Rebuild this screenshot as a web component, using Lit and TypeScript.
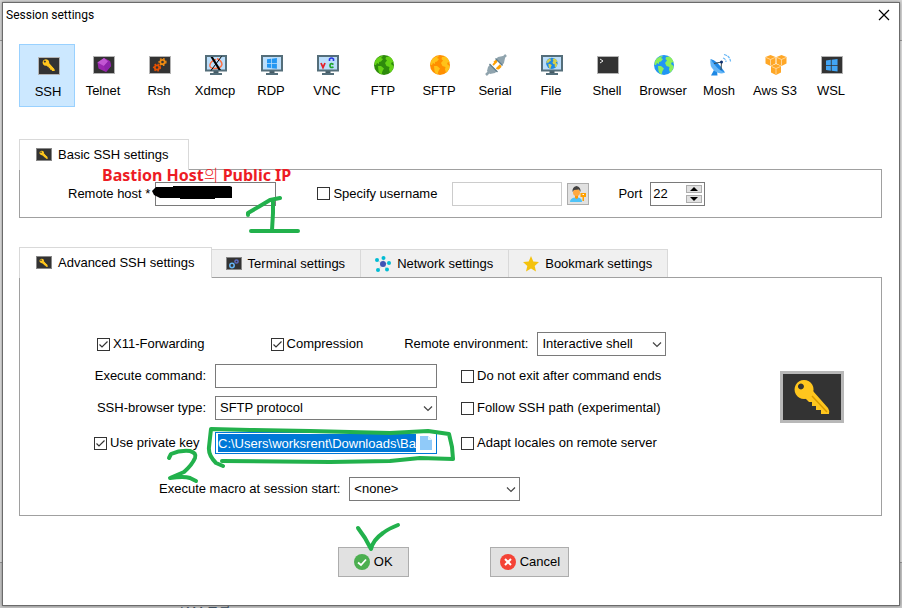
import { LitElement, html, svg, css, nothing } from "lit";
import { customElement, property } from "lit/decorators.js";
import { classMap } from "lit/directives/class-map.js";

/* ---------- icon artwork ---------- */

const keyShape = svg`
  <path d="M25 27 L33 20 L48 37 Q50 40 49 43 L41 43 L41 39 L36 39 L36 35 L32 35 L32 31 L29 31 Z" fill="#ffc61e"/>
  <path d="M32 25 L47 41" stroke="#d99a00" stroke-width="1.500"/>
  <path d="M24 9 a9.5 9.5 0 1 0 .1 0 Z M21 12.500 a3 3 0 1 1 -.1 0 Z" fill="#ffc61e" fill-rule="evenodd"/>`;

const screen = svg`<rect x="1.500" y="3.500" width="21" height="17" fill="#333" stroke="#b4b4b4"/>`;
const keyScreen = svg`${screen}<g transform="translate(.5 2) scale(.35)">${keyShape}
  <path d="M30 24 L46 40" stroke="#ffc61e" stroke-width="6"/></g>`;

const monitor = svg`
  <rect x="9.500" y="18" width="5" height="3" fill="#455a64"/>
  <rect x="6" y="20" width="12" height="2" fill="#546e7a"/>
  <rect x="2" y="3" width="20" height="14.500" fill="#bbdefb" stroke="#546e7a" stroke-width="2"/>`;

const gear = (x: number, y: number, r: number, color: string) => svg`
  <circle cx=${x} cy=${y} r=${r} fill="none" stroke=${color} stroke-width="1.800"/>
  <circle cx=${x} cy=${y} r=${r + 1.2} fill="none" stroke=${color} stroke-width="1.400" stroke-dasharray="1.600 1.650"/>`;

const globe = (sea: string, land: string) => svg`
  <circle cx="12" cy="12" r="10" fill=${sea}/>
  <path d="M4 6.500 Q7 3 11 3 L9 5 L11 6 L9 8.500 L7 9 L7 11 L5 10 L4 12 L2.500 12 Q2.200 9 4 6.500 Z M6 13 L9 13 L12 15.500 L10.500 18 L9.500 21.500 Q7 20.500 6.500 18 Z M14 4 L17.500 3.600 Q21 6 22 10 L20 9 L19 11 L21.500 13 Q21.500 17 18 19.800 L17 16.500 L17.500 14 L14.500 13 L13 10 L15 7.500 L13.500 6 Z" fill=${land}/>`;

const winLogo = (x: number, y: number, s: number, c: string) => svg`
  <g transform="translate(${x} ${y}) scale(${s})" fill=${c}>
    <path d="M0 1.500 L4.600 .8 V5.600 H0 Z M5.400 .7 L11 0 V5.600 H5.400 Z M0 6.400 H4.600 V11.200 L0 10.500 Z M5.400 6.400 H11 V12 L5.400 11.300 Z"/>
  </g>`;

const cube = (x: number, y: number) => svg`
  <g transform="translate(${x} ${y})">
    <path d="M0 2 L5 0 L10 2 V8.500 L5 11 L0 8.500 Z" fill="#ffa726"/>
    <path d="M.5 2.500 L5 4.500 L9.500 2.500 M5 4.500 V10.500" fill="none" stroke="#ffe0b2" stroke-width=".8"/>
  </g>`;

const art: Record<string, unknown> = {
  ssh: keyScreen,
  telnet: svg`${screen}
    <path d="M12 5 L18 8 L19 13 L14 19 L6.500 15.500 L5.500 9.500 Z" fill="#9c27b0"/>
    <path d="M12 5 L16 8.500 L12 13 L5.500 9.500 Z" fill="#c256d3"/>
    <path d="M12 13 L16 8.500 L18 8 L19 13 L14 19 Z" fill="#8e24aa"/>`,
  rsh: svg`${screen}${gear(9, 14.5, 2.2, "#e65100")}${gear(14.5, 9, 2.2, "#ef8b12")}`,
  xdmcp: svg`${monitor}
    <path d="M13 5.500 Q18 8 18 11.500 Q17 15.500 10 15.500 Q5 15 6 11.500 Q7 8 12 6.500" fill="none" stroke="#ff7043" stroke-width="1.400"/>
    <path d="M6.500 4 H9 L17 17 H14.500 Z" fill="#000"/>
    <path d="M17.500 3.500 L7 17.500" stroke="#000" stroke-width="1"/>`,
  rdp: svg`${monitor}${winLogo(7, 5, .9, "#2196f3")}`,
  vnc: svg`${monitor}
    <path d="M5 10 L7 14.500 L9 10" fill="none" stroke="#e5202a" stroke-width="1.800"/>
    <path d="M13.500 8 V6 Q15.500 4 17.500 6 V8" fill="none" stroke="#2836e0" stroke-width="1.600"/>
    <path d="M17.500 11.500 Q14 9.500 14 12.500 Q14 15.500 17.500 14" fill="none" stroke="#1fa32c" stroke-width="1.700"/>`,
  ftp: globe("#2e8b0c", "#64d216"),
  sftp: globe("#ff8f00", "#ffc21a"),
  serial: svg`
    <path d="M10 9.500 L13 7 M14 16 L17 13 M9 12 L13 8 M12.500 16 L16.500 12" stroke="#ffa000" stroke-width="1.800"/>
    <path d="M2 22 L5 19" stroke="#90a4ae" stroke-width="2.500"/>
    <path d="M22 2 L19 5" stroke="#90a4ae" stroke-width="2.500"/>
    <path d="M3 18 L4 14 L6 11.500 L13 18 L11 20 L6 21 Z" fill="#90a4ae"/>
    <path d="M12 6 L14 4 L19 3 L21 5 L20 10 L18 12.500 Z" fill="#90a4ae"/>
    <path d="M5.500 11 L13.500 19 M11.500 5.500 L18.500 12.500" stroke="#607d8b" stroke-width="1.300"/>`,
  file: svg`${monitor}<g transform="translate(5 3.500) scale(.57)">${globe("#1e88e5", "#d4cf4e")}</g>`,
  shell: svg`${screen}<path d="M4 6 L7 8 L4 10" fill="none" stroke="#eee"/>`,
  browser: globe("#2196f3", "#8bf05a"),
  mosh: svg`
    <path d="M6 17 L3 22.500 H9.500 L9 18 Z" fill="#1e88e5"/>
    <path d="M2.500 6 Q1 13 6.500 18 Q12 22 17 19.500 Z" fill="#64b5f6"/>
    <path d="M2.500 6 Q9 7 17 19.500 Q10 18 2.500 6 Z" fill="#1e88e5"/>
    <path d="M6 10.500 L13.500 9 L13 17" fill="none" stroke="#37474f"/>
    <circle cx="13.500" cy="9" r="1.500" fill="#0d2f6e"/>
    <path d="M15 5 Q18 6 18 9 M16 1.500 Q22 3 22.500 8.500" fill="none" stroke="#64b5f6" stroke-width="1.200" stroke-dasharray="3 .8"/>`,
  s3: svg`${cube(1.5, 2)}${cube(12.5, 2)}${cube(7, 11)}`,
  wsl: svg`${screen}${winLogo(6, 6, 1.05, "#42a5f5")}`,
};

const small: Record<string, unknown> = {
  key: svg`<rect x=".5" y="1.500" width="15" height="12" fill="#333" stroke="#888"/>
    <g transform="translate(0 1.500) scale(.24)">${keyShape}<path d="M30 24 L46 38" stroke="#ffc61e" stroke-width="7"/></g>`,
  terminal: svg`<rect x=".5" y="1.500" width="15" height="12" fill="#333" stroke="#888"/>
    <circle cx="6" cy="9.500" r="2.200" fill="none" stroke="#64b5f6" stroke-width="1.500"/>
    <circle cx="10.500" cy="5.500" r="1.600" fill="none" stroke="#5c6bc0" stroke-width="1.500"/>`,
  network: svg`<path d="M8 8 L2 4 M8 8 L8.500 2 M8 8 L14 7 M8 8 L12 13.500 M8 8 L3 14" stroke="#cfd8dc"/>
    <circle cx="8" cy="8" r="3" fill="#3f51b5"/>
    <g fill="#00bcd4"><circle cx="2" cy="4" r="2"/><circle cx="8.500" cy="2" r="2"/><circle cx="14" cy="7" r="2"/><circle cx="12" cy="13.500" r="2"/><circle cx="3" cy="14" r="2"/></g>`,
  star: svg`<path d="M8 0 L10.300 5.500 L16 6 L11.700 10 L13 15.500 L8 12.500 L3 15.500 L4.300 10 L0 6 L5.700 5.500 Z" fill="#f4c20d"/>`,
  ok: svg`<circle cx="8" cy="8" r="8" fill="#4caf50"/><path d="M4 8.500 L7 11 L12 5.500" fill="none" stroke="#fff" stroke-width="1.800"/>`,
  cancel: svg`<circle cx="8" cy="8" r="8" fill="#f44336"/><path d="M5 5 L11 11 M11 5 L5 11" stroke="#fff" stroke-width="2"/>`,
  file: svg`<path d="M2 1 H10 L14 5 V15 H2 Z" fill="#90caf9"/><path d="M10 1 V5 H14 Z" fill="#e1f5fe"/>`,
  user: svg`
    <path d="M0 16 Q0 12 5 11.500 H8 Q12 12 12 16 Z" fill="#4fc3f7"/>
    <path d="M5 9 H8 V12 L6.500 13 L5 12 Z" fill="#ff9800"/>
    <circle cx="6.500" cy="6.500" r="3.500" fill="#ffa940"/>
    <path d="M2.500 6 Q2 1 6.500 0 Q11 1 10.500 6 L9 3.500 L4 4 Z" fill="#424242"/>
    <path d="M10.500 7 H16 V11 H14 V15 H12.500 V11 H10.500 Z" fill="#ffa000"/><rect x="12.500" y="8" width="1.500" height="1" fill="#fff"/>`,
};

const smallIcon = (name: string) =>
  html`<svg class="ico" viewBox="0 0 16 16" aria-hidden="true">${small[name]}</svg>`;

const base = css`
  :host, button, input, select { font: 13px/16px "Liberation Sans", Arial, sans-serif; color: #000; }
  * { box-sizing: border-box; }
  button { margin: 0; padding: 0; border: 0; background: none; }
  input { margin: 0; }
  svg { display: block; flex: none; }
  .ico { width: 16px; height: 16px; }
`;

/* ---------- tick box with its label ---------- */

@customElement("check-field")
class CheckField extends LitElement {
  @property() label = "";
  @property({ type: Boolean }) checked = false;
  static styles = [base, css`
    :host { display: block; }
    label { display: flex; align-items: center; gap: 3px; white-space: nowrap; }
    .box { display: grid; }
    .box > * { grid-area: 1 / 1; width: 13px; height: 13px; }
    input { appearance: none; border: 1px solid #333; background: #fff; }
    svg { pointer-events: none; z-index: 1; }
  `];
  render() {
    return html`<label>
      <span class="box">
        <input type="checkbox" .checked=${this.checked}>
        ${this.checked ? html`<svg viewBox="0 0 13 13"><path d="M2.500 6.500 L5 9 L10.500 3.500" fill="none" stroke="#333" stroke-width="1.200"/></svg>` : nothing}
      </span>${this.label}</label>`;
  }
}

/* ---------- drop-down with its label ---------- */

@customElement("select-field")
class SelectField extends LitElement {
  @property() label = "";
  @property() value = "";
  static styles = [base, css`
    :host { display: block; }
    label { display: flex; align-items: center; justify-content: flex-end; gap: 9px; white-space: nowrap; }
    .wrap { display: grid; align-items: center; width: var(--field-width, 222px); }
    .wrap > * { grid-area: 1 / 1; }
    select { appearance: none; width: 100%; height: 24px; border: 1px solid #7a7a7a; border-radius: 0; background: #fff; padding: 0 4px; }
    svg { justify-self: end; margin-right: 4px; width: 10px; height: 10px; z-index: 1; pointer-events: none; }
  `];
  render() {
    return html`<label>${this.label}
      <span class="wrap">
        <select><option>${this.value}</option></select>
        <svg viewBox="0 0 10 10"><path d="M1 3.500 L5 7.500 L9 3.500" fill="none" stroke="#444" stroke-width="1.200"/></svg>
      </span></label>`;
  }
}

const sessions: [string, string][] = [
  ["SSH", "ssh"], ["Telnet", "telnet"], ["Rsh", "rsh"], ["Xdmcp", "xdmcp"], ["RDP", "rdp"],
  ["VNC", "vnc"], ["FTP", "ftp"], ["SFTP", "sftp"], ["Serial", "serial"], ["File", "file"],
  ["Shell", "shell"], ["Browser", "browser"], ["Mosh", "mosh"], ["Aws S3", "s3"], ["WSL", "wsl"],
];

const tabs: [string, string][] = [
  ["Advanced SSH settings", "key"], ["Terminal settings", "terminal"],
  ["Network settings", "network"], ["Bookmark settings", "star"],
];

@customElement("app-root")
class AppRoot extends LitElement {
  static styles = [base, css`
    :host {
      display: flex; position: relative; min-height: 100vh; padding: 2px; overflow: hidden;
      box-sizing: border-box;
      background: linear-gradient(#d6d6d6 0 40px, #999 40px 41px, #e0e0e0 41px 562px, #999 562px 563px, #c8c8c8 563px);
    }
    .behind { position: absolute; left: 180px; bottom: -12px; font: 13px/16px "Liberation Sans", "Noto Sans CJK KR", sans-serif; color: #456; }
    .dialog { position: relative; flex: 1; display: flex; flex-direction: column; background: #fff; border: 1px solid #6b6b6b; box-shadow: 0 0 3px #0006; }
    header { display: flex; justify-content: space-between; align-items: center; height: 24px; padding: 0 9px 0 3px; }
    h1 { margin: 0; font: 12px/16px Roboto, sans-serif; }
    .close svg { width: 12px; height: 12px; }

    nav { display: flex; margin: 17px 0 0 16px; }
    .session { display: flex; flex-direction: column; align-items: center; gap: 6px; width: 56px; height: 63px; padding-top: 9px; white-space: nowrap; }
    .session svg { width: 24px; height: 24px; }
    .session.on { padding: 9px 0 0 2px; background: #cce8ff; border: 1px solid #99d1ff; }

    section { margin: 32px 17px 0 16px; }
    section + section { margin-top: 29px; }
    .tabs { display: flex; align-items: flex-end; }
    .tab { display: flex; align-items: center; gap: 6px; height: 28px; padding: 0 15px 0 14px; white-space: nowrap; background: #f0f0f0; border: 1px solid #d9d9d9; border-width: 1px 1px 0 0; }
    .tab.on { position: relative; min-width: 170px; height: 31px; margin-bottom: -1px; padding: 0 16px; background: #fff; border-left-width: 1px; }
    .panel { border: 1px solid #a0a0a0; }

    .basic { display: flex; align-items: center; height: 49px; padding-left: 48px; white-space: nowrap; }
    .text { height: 24px; border: 1px solid #7a7a7a; border-radius: 0; background: #fff; padding: 0 4px; }
    .host { width: 121px; margin: 0 41px 0 5px; }
    .user { width: 110px; margin: 0 5px 0 15px; border-color: #ccc; }
    .pick { display: grid; place-items: center; width: 22px; height: 22px; margin-right: 29px; background: #e1e1e1; border: 1px solid #adadad; }
    .spin { display: flex; align-items: center; width: 55px; height: 24px; margin-left: 8px; padding: 0 2px; border: 1px solid #7a7a7a; }
    .spin input { flex: 1; min-width: 0; width: 0; border: 0; padding: 0; }
    .arrows { display: grid; gap: 2px; }
    .arrows button { display: grid; place-items: center; width: 16px; height: 8px; border: 1px solid #adadad; background: #e1e1e1; }
    .arrows svg { width: 8px; height: 4px; }

    .advanced { display: flex; justify-content: space-between; padding: 54px 37px 14px 74px; }
    .form { display: flex; flex-direction: column; align-items: flex-start; }
    .row { display: flex; align-items: center; margin: 0 0 8px 3px; }
    .compression { margin: 0 41px 0 66px; }
    .environment { --field-width: 129px; }
    .fields { display: grid; grid-template-columns: 343px auto; column-gap: 24px; row-gap: 8px; align-items: center; }
    .labelled { display: flex; align-items: center; justify-content: flex-end; gap: 9px; white-space: nowrap; }
    .command { width: 222px; }
    .keyrow { display: flex; align-items: center; justify-content: space-between; height: 30px; }
    .path { display: flex; align-items: center; justify-content: space-between; width: 222px; height: 22px; padding: 0 2px; border: 1px solid #0078d7; }
    .path input { width: 198px; height: 18px; padding: 0; border: 0; background: #0078d7; color: #fff; }
    .macro { --field-width: 171px; margin: 19px 0 0 65px; }
    .badge { width: 64px; height: 52px; margin-top: 39px; }

    footer { display: flex; justify-content: center; gap: 81px; padding: 31px 0 28px 5px; }
    footer button { display: flex; align-items: center; justify-content: center; gap: 4px; height: 30px; padding: 0 15px; background: #e1e1e1; border: 1px solid #adadad; }
    footer .cancel { padding: 0 8px 0 9px; }

    .marks { position: absolute; top: 0; left: 0; width: 902px; height: 608px; pointer-events: none; }
    .note { position: absolute; top: 163px; left: 102px; font: bold 16px/22px "Noto Sans", "Noto Sans CJK KR", sans-serif; color: #ed1c24; white-space: nowrap; }
    .note span { font-weight: 300; font-family: "Noto Sans CJK KR", sans-serif; }
  `];

  render() {
    return html`
      <span class="behind" aria-hidden="true">IAM 그룹</span>
      <main class="dialog">
        <header>
          <h1>Session settings</h1>
          <button class="close" aria-label="Close"><svg viewBox="0 0 12 12"><path d="M1 1 L11 11 M11 1 L1 11" stroke="#000" stroke-width="1.200"/></svg></button>
        </header>
        <nav>
          ${sessions.map(([name, icon], i) => html`
            <button class=${classMap({ session: true, on: i === 0 })}>
              <svg viewBox="-1 0 24 24" overflow="visible" aria-hidden="true">${art[icon]}</svg>${name}
            </button>`)}
        </nav>

        <section>
          <div class="tabs"><button class="tab on">${smallIcon("key")}Basic SSH settings</button></div>
          <div class="panel basic">
            <label for="host">Remote host *</label>
            <input id="host" class="text host" type="text">
            <check-field label="Specify username"></check-field>
            <input class="text user" type="text" aria-label="Username">
            <button class="pick" aria-label="Choose user">${smallIcon("user")}</button>
            <label for="port">Port</label>
            <span class="spin">
              <input id="port" type="text" value="22">
              <span class="arrows">
                <button aria-label="Increase"><svg viewBox="0 0 8 4"><path d="M4 0 L8 4 H0 Z"/></svg></button>
                <button aria-label="Decrease"><svg viewBox="0 0 8 4"><path d="M0 0 H8 L4 4 Z"/></svg></button>
              </span>
            </span>
          </div>
        </section>

        <section>
          <div class="tabs">
            ${tabs.map(([name, icon], i) => html`
              <button class=${classMap({ tab: true, on: i === 0 })}>${smallIcon(icon)}${name}</button>`)}
          </div>
          <div class="panel advanced">
            <div class="form">
              <div class="row">
                <check-field label="X11-Forwarding" checked></check-field>
                <check-field class="compression" label="Compression" checked></check-field>
                <select-field class="environment" label="Remote environment:" value="Interactive shell"></select-field>
              </div>
              <div class="fields">
                <label class="labelled">Execute command:<input class="text command" type="text"></label>
                <check-field label="Do not exit after command ends"></check-field>
                <select-field label="SSH-browser type:" value="SFTP protocol"></select-field>
                <check-field label="Follow SSH path (experimental)"></check-field>
                <div class="keyrow">
                  <check-field label="Use private key" checked></check-field>
                  <span class="path">
                    <input type="text" aria-label="Private key file" value="C:\\Users\\worksrent\\Downloads\\Ba">
                    <button aria-label="Browse">${smallIcon("file")}</button>
                  </span>
                </div>
                <check-field label="Adapt locales on remote server"></check-field>
              </div>
              <select-field class="macro" label="Execute macro at session start:" value="&lt;none&gt;"></select-field>
            </div>
            <svg class="badge" viewBox="0 0 64 52" aria-hidden="true">
              <rect x="1.500" y="1.500" width="61" height="49" fill="#333" stroke="#b8b8b8" stroke-width="3"/>${keyShape}
            </svg>
          </div>
        </section>

        <footer>
          <button>${smallIcon("ok")}OK</button>
          <button class="cancel">${smallIcon("cancel")}Cancel</button>
        </footer>
      </main>

      <div class="note">Bastion Host<span>의</span> Public IP</div>
      <svg class="marks" viewBox="0 0 902 608" aria-hidden="true">
        <path d="M152 191 L156 187 L173 187 V186 H230 L232 187 V198 H215 V199 H180 V198 H160 L154 195 Z"/>
        <g fill="none" stroke="#22b14c" stroke-width="4" stroke-linecap="round" stroke-linejoin="round">
          <path d="M248 215 V213 L260 206 L270 200 L280 198 M273 200 V213 L272 230 M251 231 L298 231"/>
          <path d="M169 458 L171 454 Q180 450 190 451 Q197 453 195 458 Q192 465 184 472 L170 478 Q184 476 190 478 L196 481"/>
          <path d="M223 466 L216 463 Q208 455 209 447 L211 429 L250 430 L310 431 L390 433 L428 431 L449 434 L452 447 L453 459 L420 458 L390 461 L330 462 L222 461"/>
          <path d="M358 528 L365 538 L371 549 Q373 540 383 533 Q388 529 398 525"/>
        </g>
      </svg>`;
  }
}
